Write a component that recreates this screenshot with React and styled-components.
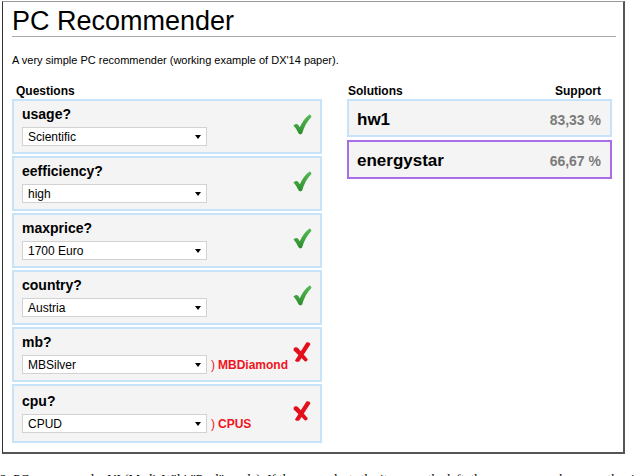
import styled, { createGlobalStyle } from 'styled-components';

const GlobalStyle = createGlobalStyle`
  html, body {
    margin: 0;
    padding: 0;
    background: #fff;
  }
  body {
    font-family: "Liberation Sans", Arial, sans-serif;
    color: #000;
  }
`;

const Page = styled.div`
  width: 640px;
  height: 476px;
  overflow: hidden;
`;

const Frame = styled.div`
  box-sizing: border-box;
  width: 623px;
  height: 453px;
  margin: 1px 0 0 2px;
  border-top: 1px solid #9a9a9a;
  border-left: 1px solid #333;
  border-right: 2px solid #555;
  border-bottom: 2px solid #555;
  padding: 2px 7px 0 9px;
`;

const Title = styled.h1`
  margin: 0;
  padding-top: 2px;
  font-size: 27px;
  line-height: 30px;
  font-weight: normal;
  border-bottom: 1px solid #aaa;
`;

const Intro = styled.p`
  margin: 16px 0 0;
  font-size: 11px;
  line-height: 15px;
`;

const Columns = styled.div`
  display: flex;
  gap: 25px;
  margin-top: 16px;
`;

const Column = styled.div`
  width: ${(p) => p.$width}px;
  display: flex;
  flex-direction: column;
`;

const ColumnHead = styled.div`
  display: flex;
  justify-content: space-between;
  padding: 0 ${(p) => p.$right || 0}px 0 ${(p) => p.$left || 0}px;
  font-size: 12px;
  line-height: 15px;
  font-weight: bold;
`;

const QuestionBox = styled.div`
  display: flex;
  justify-content: space-between;
  border: 2px solid #c6e3f8;
  background: #f4f4f4;
  padding: ${(p) => (p.$tall ? '7px 8px 8px 8px' : '5px 8px 6px 8px')};
  margin-bottom: 2px;
`;

const QuestionBody = styled.div`
  display: flex;
  flex-direction: column;
  gap: 4px;
`;

const Label = styled.div`
  font-size: 14px;
  line-height: 17px;
  font-weight: bold;
`;

const AnswerRow = styled.div`
  display: flex;
  align-items: center;
`;

const Dropdown = styled.div`
  box-sizing: border-box;
  width: 185px;
  height: 19px;
  display: flex;
  align-items: center;
  justify-content: space-between;
  padding: 0 5px 0 5px;
  background: #fff;
  border: 1px solid #d2d2d2;
  font-size: 12px;
`;

const Arrow = styled.span`
  width: 0;
  height: 0;
  border-left: 3.5px solid transparent;
  border-right: 3.5px solid transparent;
  border-top: 4px solid #000;
  margin-top: 1px;
`;

const Correction = styled.span`
  margin-left: 4px;
  color: #f0141e;
  font-size: 12px;
  font-weight: bold;
  white-space: nowrap;
`;

const Paren = styled.span`
  font-weight: normal;
  margin-right: 3px;
`;

const Mark = styled.div`
  padding-top: 8px;
  width: 20px;
  display: flex;
  justify-content: center;
`;

const SolutionBox = styled.div`
  display: flex;
  justify-content: space-between;
  align-items: flex-start;
  border: 2px solid ${(p) => (p.$active ? '#a86ee8' : '#c6e3f8')};
  background: #f4f4f4;
  padding: 9px 9px ${(p) => (p.$active ? 6 : 5)}px 8px;
  margin-bottom: 3px;
`;

const SolutionName = styled.span`
  font-size: 17px;
  line-height: 20px;
  font-weight: bold;
`;

const SolutionSupport = styled.span`
  font-size: 14px;
  line-height: 20px;
  font-weight: bold;
  color: #7b7b7b;
`;

const Caption = styled.p`
  margin: 17px 0 0;
  font-family: "Liberation Serif", "Times New Roman", serif;
  font-size: 13px;
  line-height: 16px;
  white-space: nowrap;
`;

const Check = () => (
  <svg width="19" height="21" viewBox="0 0 20 22">
    <defs>
      <linearGradient id="chk" x1="0" y1="0" x2="0" y2="1">
        <stop offset="0" stopColor="#56bd56" />
        <stop offset="1" stopColor="#2c8c2c" />
      </linearGradient>
    </defs>
    <path
      d="M0.4 12 C2 10.4 4.1 9.8 5.2 11 L7.2 14 C9.6 8.5 13 3.5 17.4 0.4 C18.8 0.9 19.6 2 19.3 3.2 C15 7.6 11.6 13.6 9.6 20.6 C8.7 21.7 6.8 21.7 6 20.6 C4.5 17.5 2.8 14.5 0.4 12 Z"
      fill="url(#chk)"
    />
  </svg>
);

const Cross = () => (
  <svg width="18" height="20" viewBox="0 0 18 20">
    <g fill="#e3101b">
      <path d="M13.4 0.4 C15.4 -0.2 17.6 0.9 17.3 2.5 L6.4 19.2 C5.2 20.2 2.6 20 2 18.4 Z" />
      <path d="M0.6 6.6 C1.8 5 4 4.9 5.2 6.2 L14.6 17 C14.8 18.9 13.2 19.8 11.8 19.2 L0.7 8.4 Z" />
    </g>
  </svg>
);

const questions = [
  { label: 'usage?', value: 'Scientific', ok: true },
  { label: 'eefficiency?', value: 'high', ok: true },
  { label: 'maxprice?', value: '1700 Euro', ok: true },
  { label: 'country?', value: 'Austria', ok: true },
  { label: 'mb?', value: 'MBSilver', ok: false, fix: 'MBDiamond' },
  { label: 'cpu?', value: 'CPUD', ok: false, fix: 'CPUS', tall: true },
];

const solutions = [
  { name: 'hw1', support: '83,33 %' },
  { name: 'energystar', support: '66,67 %', active: true },
];

export default function App() {
  return (
    <Page>
      <GlobalStyle />
      <Frame>
        <Title>PC Recommender</Title>
        <Intro>A very simple PC recommender (working example of DX'14 paper).</Intro>
        <Columns>
          <Column $width={310}>
            <ColumnHead $left={4}>
              <span>Questions</span>
            </ColumnHead>
            {questions.map((q) => (
              <QuestionBox key={q.label} $tall={q.tall}>
                <QuestionBody>
                  <Label>{q.label}</Label>
                  <AnswerRow>
                    <Dropdown>
                      <span>{q.value}</span>
                      <Arrow />
                    </Dropdown>
                    {q.fix && (
                      <Correction>
                        <Paren>)</Paren>
                        {q.fix}
                      </Correction>
                    )}
                  </AnswerRow>
                </QuestionBody>
                <Mark>{q.ok ? <Check /> : <Cross />}</Mark>
              </QuestionBox>
            ))}
          </Column>
          <Column $width={265}>
            <ColumnHead $left={1} $right={11}>
              <span>Solutions</span>
              <span>Support</span>
            </ColumnHead>
            {solutions.map((s) => (
              <SolutionBox key={s.name} $active={s.active}>
                <SolutionName>{s.name}</SolutionName>
                <SolutionSupport>{s.support}</SolutionSupport>
              </SolutionBox>
            ))}
          </Column>
        </Columns>
      </Frame>
      <Caption>
        2: PC recommender UI (MediaWiki "Paul" mode). If the user selects the items on the left, the answers are shown on the right hand side
      </Caption>
    </Page>
  );
}
